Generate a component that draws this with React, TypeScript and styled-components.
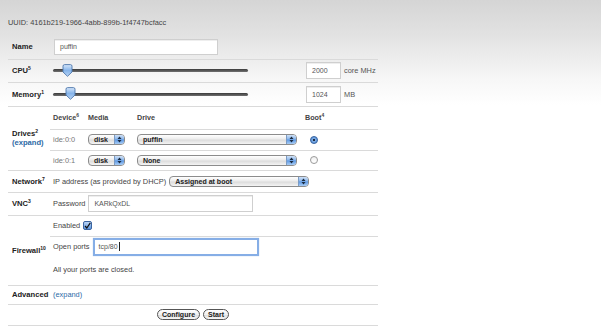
import React from 'react';
import styled, { createGlobalStyle } from 'styled-components';

const Global = createGlobalStyle`
  html, body { margin: 0; padding: 0; }
  body {
    background: linear-gradient(#d5d5d5 0px, #e2e2e2 35px, #f7f7f7 80px, #ffffff 105px) no-repeat, #ffffff;
    min-height: 330px;
    font-family: "Liberation Sans", Arial, sans-serif;
    font-size: 7.4px;
    color: #333;
  }
`;

const Page = styled.div`
  padding: 18px 0 0 8px;
`;

const Uuid = styled.div`
  color: #444;
  height: 17px;
  line-height: 9px;
`;

const Table = styled.table`
  width: 370px;
  border-collapse: collapse;
  border-spacing: 0;
`;

const Row = styled.tr<{ h: number }>`
  height: ${p => p.h}px;
  & > td { border-bottom: 1px solid #dadada; }
`;

const Label = styled.td`
  width: 38px;
  padding: 0 0 0 4px;
  font-weight: bold;
  color: #222;
  vertical-align: middle;
  white-space: nowrap;
  font-size: 7.6px;
`;

const Value = styled.td<{ pad?: number; top?: boolean }>`
  padding: 0 0 0 ${p => (p.pad ?? 3)}px;
  vertical-align: ${p => (p.top ? 'top' : 'middle')};
  color: #444;
`;

const Sup = styled.sup`
  font-size: 5px;
  vertical-align: 3px;
  line-height: 0;
`;

const Link = styled.a`
  color: #2d6aa6;
  text-decoration: none;
  display: block;
`;

const TextInput = styled.div<{ w: number; h?: number; focus?: boolean }>`
  box-sizing: border-box;
  width: ${p => p.w}px;
  height: ${p => p.h ?? 16}px;
  background: #fff;
  border: ${p => (p.focus ? '2px solid #86aee6' : '1px solid #cfcfcf')};
  box-shadow: ${p => (p.focus ? '0 0 1px #a9c7ee' : 'inset 0 1px 0 #eee')};
  display: flex;
  align-items: center;
  padding-left: ${p => (p.focus ? 4 : 5)}px;
  color: #555;
  font-size: 7px;
`;

const Caret = styled.span`
  display: inline-block;
  width: 1px;
  height: 9px;
  background: #222;
  margin-left: 1px;
`;

const Flex = styled.div<{ gap?: number }>`
  display: flex;
  align-items: center;
  gap: ${p => p.gap ?? 0}px;
`;

const SliderWrap = styled.div`
  position: relative;
  width: 195px;
  height: 14px;
  margin-right: 58px;
  display: flex;
  align-items: center;
`;

const Track = styled.div`
  width: 100%;
  height: 3px;
  border-radius: 2px;
  background: linear-gradient(#3a3a3a, #707070);
`;

const Thumb = styled.svg`
  position: absolute;
  top: 0;
`;

const Unit = styled.span`
  margin-left: 3px;
  color: #555;
`;

const SubRow = styled.div<{ h: number; line?: boolean }>`
  box-sizing: border-box;
  display: grid;
  grid-template-columns: 35px 49px 168px 1fr;
  align-items: center;
  height: ${p => p.h}px;
  border-bottom: ${p => (p.line ? '1px solid #dadada' : 'none')};
  padding-left: 3px;
`;

const Head = styled.span`
  color: #444;
  font-weight: bold;
  font-size: 7.2px;
`;

const Dim = styled.span`
  color: #777;
`;

const SelectBox = styled.div<{ w: number }>`
  box-sizing: border-box;
  width: ${p => p.w}px;
  height: 11px;
  border: 1px solid #8c8c8c;
  border-radius: 4px;
  background: linear-gradient(#ffffff, #ececec 45%, #dcdcdc 55%, #f4f4f4);
  display: flex;
  align-items: center;
  overflow: hidden;
  font-weight: bold;
  color: #222;
  font-size: 7px;
`;

const SelectText = styled.span`
  flex: 1;
  padding-left: 5px;
`;

const SelectArrow = styled.div`
  width: 9px;
  height: 100%;
  border-left: 1px solid #7b9bc4;
  background: linear-gradient(#cfe1f7, #86b3ea 48%, #5b97e2 52%, #a9cdf5);
  display: flex;
  align-items: center;
  justify-content: center;
`;

const Radio = styled.div<{ on?: boolean }>`
  box-sizing: border-box;
  width: 8px;
  height: 8px;
  border-radius: 50%;
  border: 1px solid ${p => (p.on ? '#3b65a0' : '#9a9a9a')};
  background: ${p => (p.on ? 'radial-gradient(circle, #1d2c44 0 1.3px, #7fb0ea 1.6px, #3f7fd0 100%)' : 'linear-gradient(#f0f0f0, #ffffff)')};
  margin-left: 5px;
`;

const Check = styled.div`
  box-sizing: border-box;
  width: 9px;
  height: 9px;
  border: 1px solid #3b64a0;
  border-radius: 2px;
  background: linear-gradient(#bcd6f6, #5b95de);
  display: flex;
  align-items: center;
  justify-content: center;
  margin-left: 3px;
`;

const FireBlock = styled.div`
  display: flex;
  flex-direction: column;
`;

const FireTop = styled.div`
  height: 20px;
  border-bottom: 1px solid #dadada;
  display: flex;
  align-items: center;
  padding-left: 3px;
`;

const FirePorts = styled.div`
  height: 20px;
  display: flex;
  align-items: center;
  padding-left: 3px;
`;

const FireNote = styled.div`
  height: 25px;
  display: flex;
  align-items: center;
  padding-left: 3px;
  color: #444;
`;

const ButtonCell = styled.td`
  text-align: center;
  vertical-align: middle;
`;

const Buttons = styled.div`
  display: flex;
  justify-content: center;
  gap: 3px;
`;

const Pill = styled.button`
  box-sizing: border-box;
  height: 11px;
  padding: 0 4px;
  border: 1px solid #555;
  border-radius: 6px;
  background: linear-gradient(#ffffff, #f0f0f0 50%, #dedede 55%, #f6f6f6);
  font-family: "Liberation Sans", Arial, sans-serif;
  font-size: 7px;
  font-weight: bold;
  color: #222;
  line-height: 9px;
`;

const Arrows = () => (
  <svg width="5" height="7" viewBox="0 0 5 7">
    <path d="M2.5 0.5 L4.5 3 H0.5 Z M2.5 6.5 L4.5 4 H0.5 Z" fill="#1a2a40" />
  </svg>
);

const Select = ({ w, value }: { w: number; value: string }) => (
  <SelectBox w={w}>
    <SelectText>{value}</SelectText>
    <SelectArrow><Arrows /></SelectArrow>
  </SelectBox>
);

const Slider = ({ left }: { left: number }) => (
  <SliderWrap>
    <Track />
    <Thumb width="11" height="13" viewBox="0 0 11 13" style={{ left }}>
      <defs>
        <linearGradient id="tg" x1="0" y1="0" x2="0" y2="1">
          <stop offset="0" stopColor="#d7e7fa" />
          <stop offset="0.5" stopColor="#86b4ea" />
          <stop offset="1" stopColor="#b8d5f6" />
        </linearGradient>
      </defs>
      <path d="M1 2.2 Q1 0.6 2.6 0.6 H8.4 Q10 0.6 10 2.2 V8 L5.5 12.3 L1 8 Z" fill="url(#tg)" stroke="#4d76ab" strokeWidth="0.9" />
    </Thumb>
  </SliderWrap>
);

export default function App() {
  return (
    <>
      <Global />
      <Page>
        <Uuid>UUID: 4161b219-1966-4abb-899b-1f4747bcfacc</Uuid>
        <Table>
          <tbody>
            <Row h={24}>
              <Label>Name</Label>
              <Value pad={4}>
                <TextInput w={164} h={16}>puffin</TextInput>
              </Value>
            </Row>
            <Row h={23}>
              <Label>CPU<Sup>5</Sup></Label>
              <Value>
                <Flex>
                  <Slider left={8.5} />
                  <TextInput w={35} h={17}>2000</TextInput>
                  <Unit>core MHz</Unit>
                </Flex>
              </Value>
            </Row>
            <Row h={24}>
              <Label>Memory<Sup>1</Sup></Label>
              <Value>
                <Flex>
                  <Slider left={11.5} />
                  <TextInput w={35} h={17}>1024</TextInput>
                  <Unit>MB</Unit>
                </Flex>
              </Value>
            </Row>
            <Row h={64}>
              <Label>
                Drives<Sup>2</Sup>
                <Link href="#">(expand)</Link>
              </Label>
              <Value pad={0}>
                <SubRow h={23} line>
                  <Head>Device<Sup>6</Sup></Head>
                  <Head>Media</Head>
                  <Head>Drive</Head>
                  <Head>Boot<Sup>4</Sup></Head>
                </SubRow>
                <SubRow h={21} line>
                  <Dim>ide:0:0</Dim>
                  <Select w={37} value="disk" />
                  <Select w={160} value="puffin" />
                  <Radio on />
                </SubRow>
                <SubRow h={19}>
                  <Dim>ide:0:1</Dim>
                  <Select w={37} value="disk" />
                  <Select w={160} value="None" />
                  <Radio />
                </SubRow>
              </Value>
            </Row>
            <Row h={22}>
              <Label>Network<Sup>7</Sup></Label>
              <Value>
                <Flex gap={3}>
                  <span>IP address (as provided by DHCP)</span>
                  <Select w={140} value="Assigned at boot" />
                </Flex>
              </Value>
            </Row>
            <Row h={23}>
              <Label>VNC<Sup>3</Sup></Label>
              <Value>
                <Flex gap={3}>
                  <span>Password</span>
                  <TextInput w={165} h={17}>KARkQxDL</TextInput>
                </Flex>
              </Value>
            </Row>
            <Row h={70}>
              <Label>Firewall<Sup>10</Sup></Label>
              <Value pad={0} top>
                <FireBlock>
                  <FireTop>
                    <span>Enabled</span>
                    <Check>
                      <svg width="8" height="8" viewBox="0 0 8 8">
                        <path d="M1.2 4 L3.2 6.3 L7.2 0.5" fill="none" stroke="#111" strokeWidth="1.4" />
                      </svg>
                    </Check>
                  </FireTop>
                  <FirePorts>
                    <Flex gap={3}>
                      <span>Open ports</span>
                      <TextInput w={166} h={18} focus>tcp/80<Caret /></TextInput>
                    </Flex>
                  </FirePorts>
                  <FireNote>All your ports are closed.</FireNote>
                </FireBlock>
              </Value>
            </Row>
            <Row h={19}>
              <Label>Advanced</Label>
              <Value>
                <Link href="#">(expand)</Link>
              </Value>
            </Row>
            <Row h={21}>
              <ButtonCell colSpan={2}>
                <Buttons>
                  <Pill>Configure</Pill>
                  <Pill>Start</Pill>
                </Buttons>
              </ButtonCell>
            </Row>
          </tbody>
        </Table>
      </Page>
    </>
  );
}
